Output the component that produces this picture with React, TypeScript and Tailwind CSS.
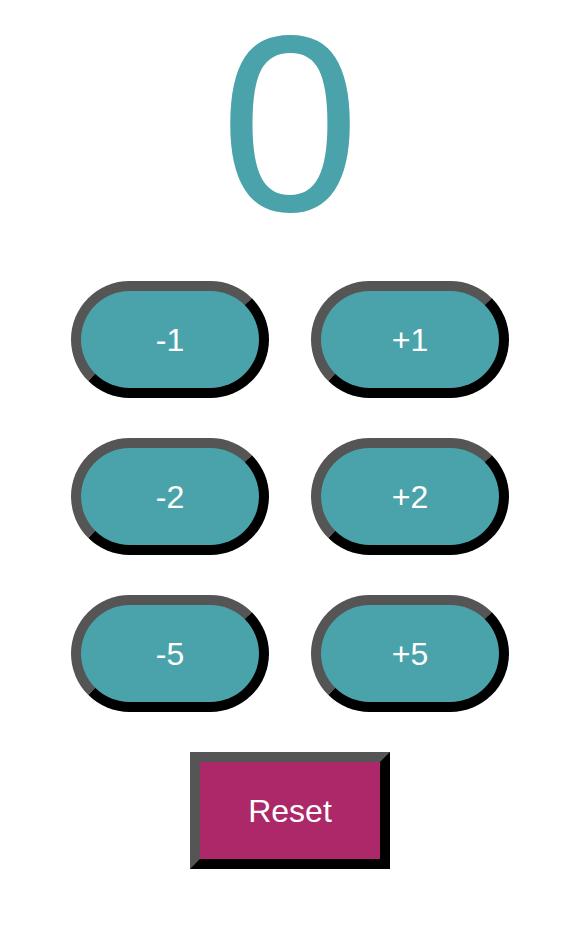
import React, { useState } from "react";

export default function App() {
  const [count, setCount] = useState(0);
  const pill =
    "w-[198px] h-[117px] rounded-full border-[10px] border-solid border-t-[#555555] border-l-[#555555] border-r-black border-b-black bg-[#4aa3aa] text-white text-[32px] flex items-center justify-center";
  return (
    <div
      className="w-[576px] min-h-[948px] bg-white flex flex-col items-center pl-[4px]"
      style={{ fontFamily: '"Liberation Sans", Arial, sans-serif' }}
    >
      <div className="h-[281px] text-[250px] leading-[250px] text-[#4aa3aa]">
        {count}
      </div>
      <div className="grid grid-cols-2 gap-x-[42px] gap-y-[40px]">
        <button className={pill} onClick={() => setCount(count - 1)}>-1</button>
        <button className={pill} onClick={() => setCount(count + 1)}>+1</button>
        <button className={pill} onClick={() => setCount(count - 2)}>-2</button>
        <button className={pill} onClick={() => setCount(count + 2)}>+2</button>
        <button className={pill} onClick={() => setCount(count - 5)}>-5</button>
        <button className={pill} onClick={() => setCount(count + 5)}>+5</button>
      </div>
      <button
        className="mt-[40px] w-[200px] h-[117px] border-[10px] border-solid border-t-[#555555] border-l-[#555555] border-r-black border-b-black bg-[#ac2869] text-white text-[32px] flex items-center justify-center"
        onClick={() => setCount(0)}
      >
        Reset
      </button>
    </div>
  );
}
